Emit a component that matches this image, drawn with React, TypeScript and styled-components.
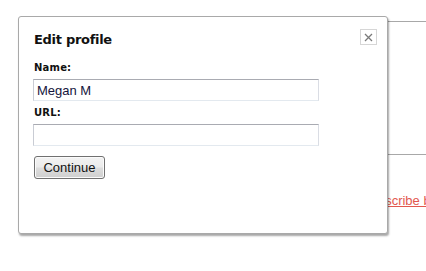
import React from 'react'
import styled, { createGlobalStyle } from 'styled-components'

const GlobalStyle = createGlobalStyle`
  html, body {
    margin: 0;
    padding: 0;
    background: #ffffff;
  }
  body {
    font-family: "Liberation Sans", Arial, sans-serif;
  }
`

const Screen = styled.div`
  position: relative;
  width: 426px;
  height: 271px;
  overflow: hidden;
  background: #ffffff;
`

// the page that sits behind the dialog
const Backdrop = styled.div`
  margin-left: 200px;
  padding-top: 21px;
`

const Panel = styled.div`
  height: 132px;
  border-top: 1px solid #a8a8a8;
  border-bottom: 1px solid #a8a8a8;
`

const SubscribeRow = styled.div`
  padding: 38px 0 0 162px;
  white-space: nowrap;
  font-size: 13px;
  line-height: 15px;
`

const SubscribeLink = styled.a`
  color: #e2584f;
  text-decoration: underline;
`

const Dialog = styled.div`
  position: absolute;
  left: 18px;
  top: 16px;
  width: 368px;
  height: 215px;
  box-sizing: content-box;
  padding: 12px 10px 0 14px;
  margin: 0;
  border: 1px solid #a9a9a9;
  border-radius: 3px;
  background: #ffffff;
  box-shadow: 1px 2px 2px rgba(0, 0, 0, 0.35);
  display: flex;
  flex-direction: column;
  align-items: flex-start;
  box-sizing: border-box;
  width: 370px;
  height: 218px;
`

const Header = styled.div`
  align-self: stretch;
  display: flex;
  justify-content: space-between;
  align-items: flex-start;
`

const Title = styled.h2`
  margin: 3px 0 0 1px;
  font-family: "DejaVu Sans", Verdana, sans-serif;
  font-weight: bold;
  font-size: 13px;
  line-height: 16px;
  letter-spacing: -0.3px;
  color: #111111;
`

const CloseButton = styled.button`
  width: 17px;
  height: 16px;
  padding: 0;
  margin: 0;
  border: 1px solid #d6d6d6;
  background: #ffffff;
  display: flex;
  align-items: center;
  justify-content: center;
  cursor: pointer;
`

const Label = styled.label<{ $top: number }>`
  display: block;
  margin: ${(p) => p.$top}px 0 5px 1px;
  font-family: "DejaVu Sans", Verdana, sans-serif;
  font-weight: bold;
  font-size: 10px;
  line-height: 12px;
  letter-spacing: 0.2px;
  color: #111111;
`

const TextInput = styled.input`
  box-sizing: border-box;
  width: 286px;
  height: 22px;
  margin: 0;
  padding: 0 3px;
  border: 1px solid;
  border-color: #a9abb2 #dadde4 #e3e9ef #c9ccd4;
  font-family: "Liberation Sans", Arial, sans-serif;
  font-size: 13px;
  color: #14143c;
  outline: none;
`

const ContinueButton = styled.button`
  margin: 10px 0 0 1px;
  box-sizing: border-box;
  width: 71px;
  height: 23px;
  padding: 0;
  border: 1px solid #707070;
  border-radius: 3px;
  box-shadow: inset 0 0 0 1px #fbfbfb;
  background: linear-gradient(#f3f3f3 0%, #ebebeb 48%, #dddddd 52%, #cfcfcf 100%);
  font-family: "Liberation Sans", Arial, sans-serif;
  font-size: 13px;
  color: #111111;
  cursor: pointer;
`

const CloseIcon = () => (
  <svg width="9" height="9" viewBox="0 0 9 9">
    <path d="M1 1 L8 8 M8 1 L1 8" stroke="#7a7a7a" strokeWidth="1.3" fill="none" />
  </svg>
)

export default function App() {
  return (
    <>
      <GlobalStyle />
      <Screen>
        <Backdrop>
          <Panel />
          <SubscribeRow>
            <SubscribeLink href="#">Subscribe by email</SubscribeLink>
          </SubscribeRow>
        </Backdrop>

        <Dialog>
          <Header>
            <Title>Edit profile</Title>
            <CloseButton aria-label="Close">
              <CloseIcon />
            </CloseButton>
          </Header>
          <Label $top={14}>Name:</Label>
          <TextInput defaultValue="Megan M" />
          <Label $top={6}>URL:</Label>
          <TextInput defaultValue="" />
          <ContinueButton>Continue</ContinueButton>
        </Dialog>
      </Screen>
    </>
  )
}
